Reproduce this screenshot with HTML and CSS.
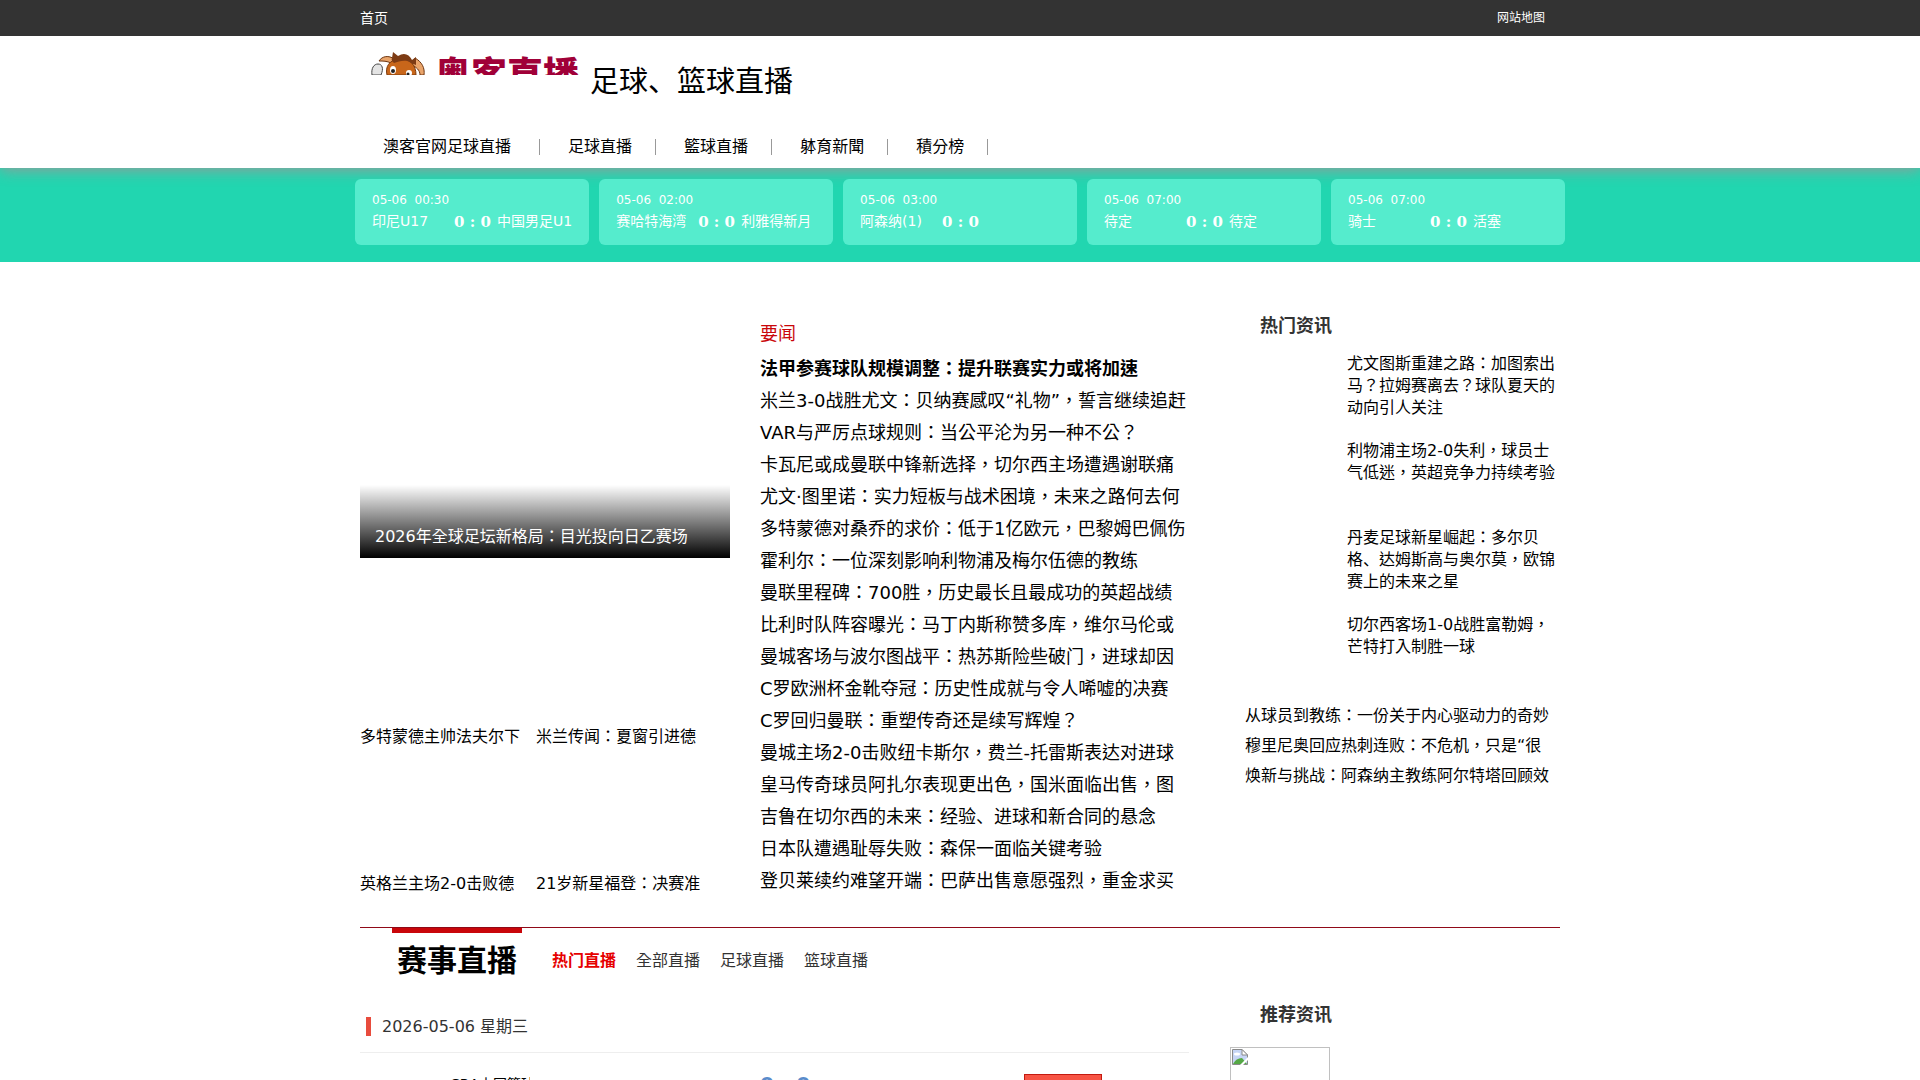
FILE: index.html
```html
<!DOCTYPE html>
<html lang="zh-TW">

<head>
    <meta charset="UTF-8">
    <meta name="viewport" content="width=device-width, initial-scale=1.0">
    <title>奥客直播</title>
    <link rel="stylesheet" href="styles.css">
</head>

<body>
    <div class="topbar">
        <div class="wrap topbar-in">
            <a href="#">首页</a>
            <a href="#" class="sitemap">网站地图</a>
        </div>
    </div>

    <header class="header">
        <div class="wrap">
            <div class="brand">
                <a href="#" class="logo">
                    <svg class="bull" width="56" height="24" viewBox="0 0 56 24">
                        <path d="M2 24C1 17 4 13 8 13C12 13 14 17 11 24Z" fill="#e4e4e4" stroke="#444" />
                        <path d="M9 10C12 5 19 4 24 8L21 12C17 10 13 10 9 10Z" fill="#e9a46a" stroke="#6d3510" />
                        <path d="M45 7C52 11 55 17 54 24H50C50 19 46 16 42 14Z" fill="#e9a46a" stroke="#6d3510" />
                        <path d="M17 24C15 16 19 9 29 8C40 7 46 14 46 24Z" fill="#c8661a" stroke="#7c3a0c" />
                        <path d="M22 7L23 1L28 5C34 1 39 3 42 9L46 6L46 14L41 12C37 8 29 10 24 12C22 10 21 9 22 7Z" fill="#7d3b14" />
                        <ellipse cx="23" cy="19" rx="3" ry="4" fill="#fff" />
                        <circle cx="23" cy="20" r="2" fill="#222" />
                        <ellipse cx="39" cy="22" rx="3" ry="3" fill="#fff" />
                        <circle cx="38" cy="23" r="1.500" fill="#222" />
                    </svg>
                    <span class="logo-text">奥客直播</span>
                </a>
                <h1 lang="zh-CN">足球、篮球直播</h1>
            </div>
            <nav class="nav">
                <a href="#">澳客官网足球直播&nbsp;</a>
                <a href="#">足球直播</a>
                <a href="#">籃球直播</a>
                <a href="#">躰育新聞</a>
                <a href="#">積分榜</a>
            </nav>
        </div>
    </header>

    <div class="matches">
        <div class="match-list">
            <a href="#" class="match">
                <span class="time">05-06&nbsp; 00:30</span>
                <span class="teams"><span class="home">印尼U17</span><b>0 : 0</b><span>中国男足U1</span></span>
            </a>
            <a href="#" class="match">
                <span class="time">05-06&nbsp; 02:00</span>
                <span class="teams"><span class="home">赛哈特海湾</span><b>0 : 0</b><span>利雅得新月</span></span>
            </a>
            <a href="#" class="match">
                <span class="time">05-06&nbsp; 03:00</span>
                <span class="teams"><span class="home">阿森纳(1)</span><b>0 : 0</b><span></span></span>
            </a>
            <a href="#" class="match">
                <span class="time">05-06&nbsp; 07:00</span>
                <span class="teams"><span class="home">待定</span><b>0 : 0</b><span>待定</span></span>
            </a>
            <a href="#" class="match">
                <span class="time">05-06&nbsp; 07:00</span>
                <span class="teams"><span class="home">骑士</span><b>0 : 0</b><span>活塞</span></span>
            </a>
        </div>
    </div>

    <main class="wrap">
        <div class="news">
            <div class="focus">
                <a href="#" class="slide"><span>2026年全球足坛新格局：目光投向日乙赛场</span></a>
                <div class="thumbs">
                    <a href="#">多特蒙德主帅法夫尔下</a>
                    <a href="#">米兰传闻：夏窗引进德</a>
                    <a href="#">英格兰主场2-0击败德</a>
                    <a href="#">21岁新星福登：决赛准</a>
                </div>
            </div>

            <div class="headlines">
                <h2>要闻</h2>
                <ul>
                    <li class="top"><a href="#">法甲参赛球队规模调整：提升联赛实力或将加速</a></li>
                    <li><a href="#">米兰3-0战胜尤文：贝纳赛感叹“礼物”，誓言继续追赶</a></li>
                    <li><a href="#">VAR与严厉点球规则：当公平沦为另一种不公？</a></li>
                    <li><a href="#">卡瓦尼或成曼联中锋新选择，切尔西主场遭遇谢联痛</a></li>
                    <li><a href="#">尤文·图里诺：实力短板与战术困境，未来之路何去何</a></li>
                    <li><a href="#">多特蒙德对桑乔的求价：低于1亿欧元，巴黎姆巴佩伤</a></li>
                    <li><a href="#">霍利尔：一位深刻影响利物浦及梅尔伍德的教练</a></li>
                    <li><a href="#">曼联里程碑：700胜，历史最长且最成功的英超战绩</a></li>
                    <li><a href="#">比利时队阵容曝光：马丁内斯称赞多库，维尔马伦或</a></li>
                    <li><a href="#">曼城客场与波尔图战平：热苏斯险些破门，进球却因</a></li>
                    <li><a href="#">C罗欧洲杯金靴夺冠：历史性成就与令人唏嘘的决赛</a></li>
                    <li><a href="#">C罗回归曼联：重塑传奇还是续写辉煌？</a></li>
                    <li><a href="#">曼城主场2-0击败纽卡斯尔，费兰-托雷斯表达对进球</a></li>
                    <li><a href="#">皇马传奇球员阿扎尔表现更出色，国米面临出售，图</a></li>
                    <li><a href="#">吉鲁在切尔西的未来：经验<span lang="zh-CN" class="sc">、</span>进球和新合同的悬念</a></li>
                    <li><a href="#">日本队遭遇耻辱失败：森保一面临关键考验</a></li>
                    <li><a href="#">登贝莱续约难望开端：巴萨出售意愿强烈，重金求买</a></li>
                </ul>
            </div>

            <aside class="hot">
                <h3 class="side-title">热门资讯</h3>
                <div class="hot-list">
                    <a href="#">尤文图斯重建之路：加图索出马？拉姆赛离去？球队夏天的动向引人关注</a>
                    <a href="#">利物浦主场2-0失利，球员士气低迷，英超竞争力持续考验</a>
                    <a href="#">丹麦足球新星崛起：多尔贝格<span lang="zh-CN" class="sc">、</span>达姆斯高与奥尔莫，欧锦赛上的未来之星</a>
                    <a href="#">切尔西客场1-0战胜富勒姆，芒特打入制胜一球</a>
                </div>
                <ul class="more">
                    <li><a href="#">从球员到教练：一份关于内心驱动力的奇妙</a></li>
                    <li><a href="#">穆里尼奥回应热刺连败：不危机，只是“很</a></li>
                    <li><a href="#">焕新与挑战：阿森纳主教练阿尔特塔回顾效</a></li>
                </ul>
            </aside>
        </div>

        <div class="live-head">
            <h2>赛事直播</h2>
            <a href="#" class="on">热门直播</a>
            <a href="#">全部直播</a>
            <a href="#">足球直播</a>
            <a href="#">篮球直播</a>
        </div>

        <div class="live">
            <div class="schedule">
                <div class="date">2026-05-06 星期三</div>
                <div class="game">
                    <span class="league">CBA中国篮球</span>
                    <b class="score">0 - 0</b>
                    <a href="#" class="watch"></a>
                </div>
            </div>
            <aside class="recommend">
                <h3 class="side-title">推荐资讯</h3>
                <div class="pic">
                    <svg width="16" height="16" viewBox="0 0 16 16">
                        <path d="M0.500 0.500H10L15.500 6V15.500H0.500Z" fill="#c6d5f5" stroke="#8a8a8a" />
                        <path d="M10 0.500V6H15.500Z" fill="#fff" stroke="#8a8a8a" />
                        <ellipse cx="5" cy="5" rx="3" ry="1.500" fill="#fff" />
                        <path d="M1 15C3 11 6 9 10 9L15 15Z" fill="#55a845" />
                        <path d="M8 16L16 8V11L11 16Z" fill="#fff" />
                    </svg>
                </div>
            </aside>
        </div>
    </main>
</body>

</html>
```
FILE: styles.css
```css
* {
    margin: 0;
    padding: 0;
    box-sizing: border-box;
}

body {
    height: 100vh;
    overflow: hidden;
    background: #fff;
    color: #000;
    font: 16px/22px "DejaVu Sans", "Noto Sans CJK TC", sans-serif;
}

a {
    color: inherit;
    text-decoration: none;
}

ul {
    list-style: none;
}

.wrap {
    max-width: 1200px;
    margin: 0 auto;
}

.sc {
    font-family: "Noto Sans CJK SC", sans-serif;
    line-height: 1;
}

.topbar {
    position: relative;
    z-index: 1;
    background: #333;
    color: #fff;
    font-size: 14px;
    line-height: 36px;
}

.topbar-in {
    display: flex;
    justify-content: space-between;
    padding-right: 15px;
}

.sitemap {
    font-size: 12px;
}

.header {
    position: relative;
    background: #fff;
    box-shadow: 0 2px 14px #999;
    padding-top: 15px;
}

.brand {
    display: flex;
    height: 80px;
    padding-left: 10px;
}

.logo {
    display: flex;
    gap: 9px;
    width: 220px;
    height: 24px;
    overflow: hidden;
}

.bull {
    flex: none;
}

.logo-text {
    color: #a00038;
    font-family: "Noto Sans CJK SC", sans-serif;
    font-size: 36px;
    font-weight: 900;
    line-height: 42px;
    white-space: nowrap;
}

h1 {
    font-family: "DejaVu Sans", "Noto Sans CJK SC", sans-serif;
    font-size: 29px;
    font-weight: normal;
    line-height: 62px;
}

.nav {
    display: flex;
    height: 37px;
    padding-top: 8px;
}

.nav a {
    height: 16px;
    line-height: 16px;
    padding: 0 23px 0 28px;
    border-right: 1px solid #999;
}

.nav a:first-child {
    padding-left: 23px;
}

.matches {
    background: #21d6b0;
    padding: 11px 0 17px;
}

.match-list {
    position: relative;
    display: grid;
    grid-template-columns: repeat(5, 1fr);
    gap: 10px;
    max-width: 1210px;
    margin: 0 auto;
}

.match {
    height: 66px;
    padding: 10px 17px;
    border-radius: 6px;
    background: #55eccd;
    color: #fff;
    font-size: 14px;
}

.time {
    display: block;
    font-size: 12px;
}

.teams {
    display: flex;
    line-height: 20px;
    white-space: nowrap;
}

.home {
    width: 82px;
}

.match b {
    width: 43px;
    font-family: "DejaVu Serif", serif;
    font-size: 15px;
    line-height: 22px;
}

.news {
    display: grid;
    grid-template-columns: 370px 1fr 330px;
    column-gap: 30px;
    height: 665px;
    padding-top: 50px;
}

.slide {
    display: flex;
    align-items: flex-end;
    height: 246px;
    color: #fff;
}

.slide span {
    width: 100%;
    padding: 41px 15px 10px;
    background: linear-gradient(transparent, #000);
}

.thumbs {
    display: grid;
    grid-template-columns: 176px 176px;
    grid-auto-rows: 147px;
    padding-top: 43px;
}

.thumbs a {
    align-self: end;
}

.headlines {
    font-size: 18px;
    line-height: 32px;
    white-space: nowrap;
}

.headlines h2 {
    padding-top: 4px;
    color: #c9060a;
    font-size: 18px;
    font-weight: normal;
    line-height: 36px;
}

.top {
    font-weight: bold;
    padding-top: 1px;
}

.side-title {
    padding-left: 30px;
    color: #333;
    font-size: 18px;
    line-height: 28px;
}

.hot-list {
    display: grid;
    grid-auto-rows: 87px;
    padding: 13px 0 0 117px;
}

.more {
    padding: 0 15px;
    line-height: 30px;
    white-space: nowrap;
}

.live-head {
    display: flex;
    gap: 20px;
    height: 66px;
    padding-left: 32px;
    border-top: 1px solid #900a18;
    color: #333;
    line-height: 66px;
}

.live-head h2 {
    width: 130px;
    margin-right: 10px;
    border-top: 5px solid #c9060a;
    color: #000;
    font-size: 30px;
    line-height: 56px;
    text-align: center;
}

.live-head .on {
    color: #e60000;
    font-weight: bold;
}

.live {
    display: grid;
    grid-template-columns: 829px 1fr;
    column-gap: 41px;
}

.date {
    display: flex;
    align-items: center;
    gap: 11px;
    height: 60px;
    padding: 8px 6px 0;
    border-bottom: 1px solid #eee;
    color: #333;
}

.date::before {
    content: "";
    width: 5px;
    height: 19px;
    background: #e84c3d;
}

.game {
    display: grid;
    grid-template-columns: 310px 264px 78px;
    padding: 21px 0 0 90px;
}

.league {
    width: 80px;
    overflow: hidden;
    font-size: 14px;
    line-height: 20px;
    white-space: nowrap;
}

.score {
    color: #5a8ccb;
    font-size: 20px;
    line-height: 20px;
    white-space: nowrap;
}

.watch {
    height: 30px;
    border: 1px solid #c31a10;
    background: #f75444;
}

.recommend .side-title {
    padding-top: 8px;
}

.pic {
    width: 100px;
    height: 70px;
    margin-top: 18px;
    padding: 1px;
    border: 1px solid #c0c0c0;
}
```
